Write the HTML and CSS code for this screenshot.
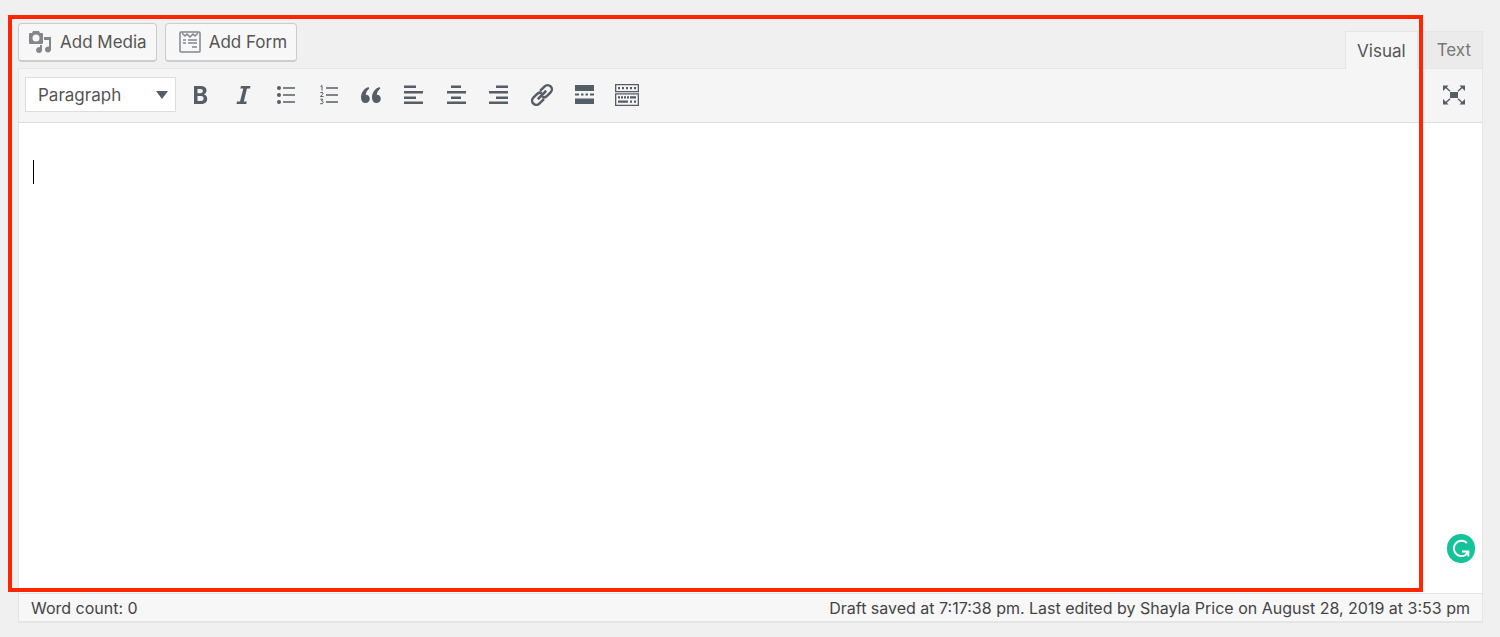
FILE: index.html
```html
<!DOCTYPE html>
<html lang="en">
  <head>
    <meta charset="utf-8">
    <title>Edit Post</title>
    <link rel="stylesheet" href="styles.css">
  </head>
  <body>
    <div class="editor-wrap">
      <div class="editor-tools">
        <div class="media-buttons">
          <button type="button" class="button">
            <svg class="media-icon" viewBox="0 0 24 24" width="24" height="24">
              <path fill-rule="evenodd" d="M2 3h2l1-2h6l1 2h2q1 0 1 1v9q0 1-1 1H2q-1 0-1-1V4q0-1 1-1zM8 4.500a3.500 3.500 0 1 0 0 7a3.500 3.500 0 1 0 0-7z"/>
              <path d="M16 7h7v12.500a3 3 0 1 1-2-2.800V10h-5z"/>
              <path d="M12 15h2v4.500a3 3 0 1 1-2-2.300z"/>
            </svg>
            Add Media
          </button>
          <button type="button" class="button button-form">
            <svg class="form-icon" viewBox="0 0 22 22" width="22" height="22">
              <rect x="1" y="1" width="20" height="20" rx="1"/>
              <path d="M3 2l3 3 2-2 3 3 3-3 2 2 3-3M4 9h3M9 9h9M4 12h3M9 12h9M13 16h5"/>
            </svg>
            Add Form
          </button>
        </div>
        <div class="editor-tabs">
          <button type="button" class="tab active">Visual</button>
          <button type="button" class="tab">Text</button>
        </div>
      </div>

      <div class="editor-container">
        <div class="toolbar">
          <div class="format-select">
            <select aria-label="Format">
              <option>Paragraph</option>
              <option>Heading 1</option>
              <option>Heading 2</option>
              <option>Preformatted</option>
            </select>
            <svg class="arrow" viewBox="0 0 12 8" width="12" height="8"><path d="M0 0h12L6 8z"/></svg>
          </div>
          <div class="tool-buttons">
            <button type="button" class="tool" aria-label="Bold">
              <svg viewBox="0 0 24 24" width="24" height="24"><path fill-rule="evenodd" d="M5 3h6.500c4 0 6 1.600 6 4.500 0 2-1 3.300-2.800 3.900 2.300.5 3.500 2 3.500 4.300 0 3.300-2.300 5.300-6.400 5.300H5zM8.500 6v4.200h2.700c1.800 0 2.700-.7 2.700-2.100S13 6 11.200 6zM8.500 13v5h3.200c1.900 0 2.900-.8 2.900-2.500S13.600 13 11.600 13z"/></svg>
            </button>
            <button type="button" class="tool" aria-label="Italic">
              <svg viewBox="0 0 24 24" width="24" height="24"><path d="M9 3h9.500l-.5 2.500h-3L11.800 18.500h3L14.300 21H4.500l.5-2.500h3l3.300-13h-3z"/></svg>
            </button>
            <button type="button" class="tool" aria-label="Bulleted list">
              <svg viewBox="0 0 24 24" width="24" height="24"><circle cx="5" cy="5" r="2"/><circle cx="5" cy="12" r="2"/><circle cx="5" cy="19" r="2"/><path d="M9 4.300h12v1.500H9zM9 11.300h12v1.500H9zM9 18.300h12v1.500H9z"/></svg>
            </button>
            <button type="button" class="tool" aria-label="Numbered list">
              <svg viewBox="0 0 24 24" width="24" height="24"><path d="M9 4.300h12v1.500H9zM9 11.300h12v1.500H9zM9 18.300h12v1.500H9z"/><path class="line" d="M3.500 3.500L5 2.500V7.500M3.300 9.700q2.700-1.200 2.700.5q0 1-2.600 3.300H6.500M3.300 16.200h2.500L4.500 18q1.700 0 1.700 1.500q0 1.800-3 1.200"/></svg>
            </button>
            <button type="button" class="tool" aria-label="Blockquote">
              <svg viewBox="0 0 24 24" width="24" height="24"><path d="M9.500 4C5 5.500 2 9.500 2 14.500 2 18 3.700 20 6.500 20c2.500 0 4.300-1.800 4.300-4.200 0-2.500-1.600-4.100-4-4.100C7 9.500 8 7.300 10.300 5.500zM20.500 4C16 5.500 13 9.500 13 14.500c0 3.500 1.700 5.500 4.500 5.500 2.500 0 4.300-1.800 4.300-4.200 0-2.500-1.600-4.100-4-4.100.2-2.200 1.200-4.400 3.500-6.200z"/></svg>
            </button>
            <button type="button" class="tool" aria-label="Align left">
              <svg viewBox="0 0 24 24" width="24" height="24"><path d="M2 2.500h12V5H2zM2 8h19v2.500H2zM2 13.500h12V16H2zM2 18.500h19V21H2z"/></svg>
            </button>
            <button type="button" class="tool" aria-label="Align center">
              <svg viewBox="0 0 24 24" width="24" height="24"><path d="M6 2.500h10V5H6zM2 8h19v2.500H2zM6 13.500h10V16H6zM2 18.500h19V21H2z"/></svg>
            </button>
            <button type="button" class="tool" aria-label="Align right">
              <svg viewBox="0 0 24 24" width="24" height="24"><path d="M9 2.500h12V5H9zM2 8h19v2.500H2zM9 13.500h12V16H9zM2 18.500h19V21H2z"/></svg>
            </button>
            <button type="button" class="tool" aria-label="Insert link">
              <svg viewBox="0 0 24 24" width="24" height="24"><g class="link-icon" transform="rotate(-45 12 12)"><path d="M10.500 16.200H4a4.200 4.200 0 0 1 0-8.400H9q3.500 0 4 2.700M13.500 7.800H20a4.200 4.200 0 0 1 0 8.400H15q-3.500 0-4-2.700M6 12h12"/></g></svg>
            </button>
            <button type="button" class="tool" aria-label="Insert Read More tag">
              <svg viewBox="0 0 24 24" width="24" height="24"><path d="M3 2h19v6H3zM3 10.500h4v2H3zM9 10.500h2.500v2H9zM13.500 10.500h2.500v2h-2.500zM18 10.500h4v2h-4zM3 15.500h19V21H3z"/></svg>
            </button>
            <button type="button" class="tool" aria-label="Toolbar Toggle">
              <svg viewBox="0 0 24 24" width="24" height="24"><path fill-rule="evenodd" d="M0 1h24v8.300H0zM1.300 2.300V8h21.400V2.300zM0 10.300h24V23H0zM1.300 11.600v10.100h21.400V11.600z"/><path d="M3 4h2v2.300H3zM7 4h2v2.300H7zM11 4h2v2.300h-2zM15 4h2v2.300h-2zM19 4h2v2.300h-2zM3 13.300h2v2.300H3zM6 13.300h2v2.300H6zM9 13.300h2v2.300H9zM12 13.300h2v2.300h-2zM15 13.300h6v2.300h-6zM3 17.500h10v2.300H3zM15 17.500h2v2.300h-2zM19 17.500h2v2.300h-2z"/></svg>
            </button>
          </div>
          <button type="button" class="tool fullscreen" aria-label="Distraction-free writing mode">
            <svg viewBox="0 0 24 24" width="24" height="24"><path d="M8 9h8v6H8zM1 2.500h5.500L4.800 4.200 8.500 7.800 7.600 8.700 3.800 5.200 1 8zM23 2.500h-5.500l1.700 1.700-3.700 3.600.9.900 3.800-3.500L23 8zM1 21.500h5.500l-1.700-1.700 3.700-3.600-.9-.9-3.800 3.500L1 16zM23 21.500h-5.500l1.700-1.700-3.700-3.600.9-.9 3.800 3.500L23 16z"/></svg>
          </button>
        </div>

        <div class="edit-area">
          <textarea class="content" aria-label="Content"></textarea>
          <span class="caret"></span>
          <button type="button" class="grammar-button" aria-label="Check grammar">
            <svg viewBox="0 0 28 28" width="28" height="29"><path d="M20 8.500A7.700 7.700 0 1 0 18.500 20.500L21 17.500M15 17h6.300v5"/></svg>
          </button>
        </div>

        <div class="status-bar">
          <span>Word count: 0</span>
          <span>Draft saved at 7:17:38 pm. Last edited by Shayla Price on August 28, 2019 at 3:53 pm</span>
        </div>
      </div>

      <div class="highlight"></div>
    </div>
  </body>
</html>
```
FILE: styles.css
```css
* {
  box-sizing: border-box;
}
body {
  margin: 0;
  background: #f0f0f0;
  color: #444;
  font-family: Inter, "Liberation Sans", sans-serif;
  font-size: 16px;
}
button,
select,
textarea {
  margin: 0;
  font-family: inherit;
  color: inherit;
}
svg {
  display: block;
  flex: none;
}
.editor-wrap {
  position: relative;
  padding: 23px 17px 14px 18px;
}
.editor-tools {
  display: flex;
  justify-content: space-between;
  align-items: flex-end;
}
.media-buttons {
  display: flex;
  gap: 8px;
  padding-bottom: 6px;
}
.button {
  display: flex;
  align-items: center;
  gap: 8px;
  height: 39px;
  padding: 0 9px;
  border: 1px solid #ccc;
  border-bottom-width: 2px;
  border-radius: 4px;
  background: #f7f7f7;
  color: #555;
  font-size: 17px;
  cursor: pointer;
}
.button-form {
  padding-left: 13px;
}
.media-icon {
  fill: #82878c;
}
.form-icon {
  fill: none;
  stroke: #82878c;
  stroke-width: 1.5;
}
.editor-tabs {
  display: flex;
  gap: 7px;
}
.tab {
  height: 37px;
  padding: 0 11px;
  border: 1px solid #e5e5e5;
  border-bottom: 0;
  background: #ebebeb;
  color: #777;
  font-size: 17px;
  cursor: pointer;
}
/* covers the top border of the container */
.tab.active {
  position: relative;
  height: 38px;
  margin-bottom: -1px;
  background: #f5f5f5;
  color: #555;
}
.editor-container {
  border: 1px solid #e5e5e5;
  border-bottom-width: 2px;
}
.toolbar {
  display: flex;
  align-items: center;
  height: 54px;
  padding: 0 7px 2px 6px;
  border-bottom: 1px solid #ddd;
  background: #f5f5f5;
}
.format-select {
  position: relative;
  width: 151px;
  margin-right: 4px;
}
.format-select select {
  display: block;
  width: 100%;
  height: 35px;
  padding: 0 12px;
  border: 1px solid #ddd;
  border-radius: 0;
  background: #fff;
  color: #555;
  font-size: 17px;
  appearance: none;
}
.arrow {
  position: absolute;
  top: 14px;
  right: 8px;
  fill: #555d66;
  pointer-events: none;
}
.tool-buttons {
  display: grid;
  grid-template-columns: repeat(11, 1fr);
  width: 468px;
}
.tool {
  display: flex;
  align-items: center;
  justify-content: center;
  height: 40px;
  padding: 0;
  border: 0;
  background: none;
  cursor: pointer;
}
.tool svg {
  fill: #555d66;
}
.tool .line,
.tool .link-icon {
  fill: none;
  stroke: #555d66;
}
.tool .link-icon {
  stroke-width: 2.5;
}
.fullscreen {
  width: 42px;
  margin-left: auto;
}
.edit-area {
  position: relative;
}
.content {
  display: block;
  width: 100%;
  height: 470px;
  padding: 36px 14px;
  border: 0;
  outline: 0;
  resize: none;
  background: #fff;
  font-size: 19px;
}
.caret {
  position: absolute;
  top: 37px;
  left: 14px;
  width: 1px;
  height: 24px;
  background: #000;
}
.grammar-button {
  position: absolute;
  right: 7px;
  bottom: 30px;
  padding: 0;
  border: 0;
  border-radius: 14px;
  background: #15c39a;
  cursor: pointer;
}
.grammar-button svg {
  fill: none;
  stroke: #fff;
  stroke-width: 2;
}
.status-bar {
  display: flex;
  justify-content: space-between;
  padding: 4px 12px 3px;
  border-top: 1px solid #e5e5e5;
  background: #f7f7f7;
  line-height: 20px;
}
/* red frame over the writing area */
.highlight {
  position: absolute;
  top: 15px;
  right: 77px;
  bottom: 45px;
  left: 8px;
  border: 4px solid #ff2600;
  pointer-events: none;
}
```
